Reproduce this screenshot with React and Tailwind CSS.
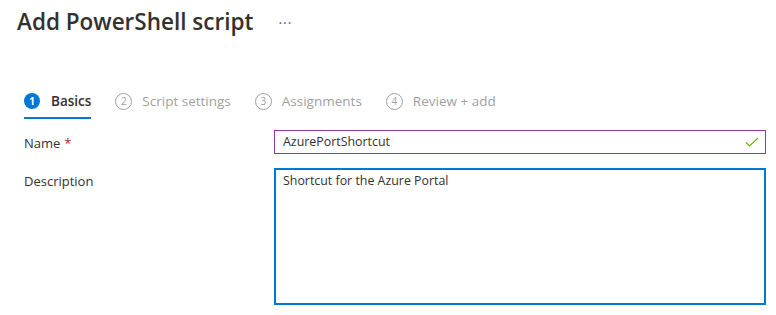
import React from 'react'

const font = { fontFamily: '"Segoe UI", "Open Sans", "Noto Sans", sans-serif' }

const steps = [
  { n: 1, label: 'Basics', active: true },
  { n: 2, label: 'Script settings' },
  { n: 3, label: 'Assignments' },
  { n: 4, label: 'Review + add' },
]

function Step({ n, label, active }) {
  if (active) {
    return (
      <div className="flex flex-col">
        <div className="flex items-center gap-[11px] h-[26px]">
          <span className="flex items-center justify-center w-[16px] h-[16px] rounded-full bg-[#0078d4] text-white text-[10px] font-bold leading-none">
            {n}
          </span>
          <span className="text-[13.5px] font-semibold text-[#323130]">{label}</span>
        </div>
        <div className="h-[2px] mt-[3px] bg-[#0078d4]" />
      </div>
    )
  }
  return (
    <div className="flex flex-col">
      <div className="flex items-center gap-[10px] h-[26px]">
        <span className="flex items-center justify-center w-[17px] h-[17px] rounded-full border border-[#a19f9d] text-[#a19f9d] text-[10px] leading-none">
          {n}
        </span>
        <span className="text-[13.5px] text-[#a19f9d]">{label}</span>
      </div>
      <div className="h-[2px] mt-[3px]" />
    </div>
  )
}

export default function App() {
  return (
    <div className="w-[776px] h-[315px] bg-white text-[#323130] overflow-hidden" style={font}>
      {/* Title */}
      <div className="flex items-center pl-[17px] pt-[4px] h-[40px]">
        <h1 className="text-[22.5px] font-semibold leading-[32px] text-[#323130]">Add PowerShell script</h1>
        <span className="ml-[25px] text-[14px] text-[#605e5c] tracking-[1px]">···</span>
      </div>

      {/* Wizard steps */}
      <div className="flex gap-[24px] pl-[24px] mt-[48px]">
        {steps.map((s) => (
          <Step key={s.n} {...s} />
        ))}
      </div>

      {/* Form */}
      <div className="grid grid-cols-[250px_492px] gap-y-[14px] pl-[24px] mt-[11px]">
        <label className="flex items-center text-[13px] h-[24px] pt-[3px]">
          Name <span className="ml-[4px] text-[#a4262c]">*</span>
        </label>
        <div className="flex items-center h-[24px] border border-[#8a3aa8] px-[8px]">
          <span className="flex-1 text-[12.4px]">AzurePortShortcut</span>
          <svg width="14" height="10" viewBox="0 0 14 10" className="mr-[-2px]">
            <path d="M1 5.5 L4.5 9 L13 1" fill="none" stroke="#6bb700" strokeWidth="1.2" />
          </svg>
        </div>

        <label className="text-[13px] pt-[4px]">Description</label>
        <div className="h-[137px] border-2 border-[#0078d4] px-[7px] pt-[2px] text-[12.4px]">
          Shortcut for the Azure Portal
        </div>
      </div>
    </div>
  )
}
